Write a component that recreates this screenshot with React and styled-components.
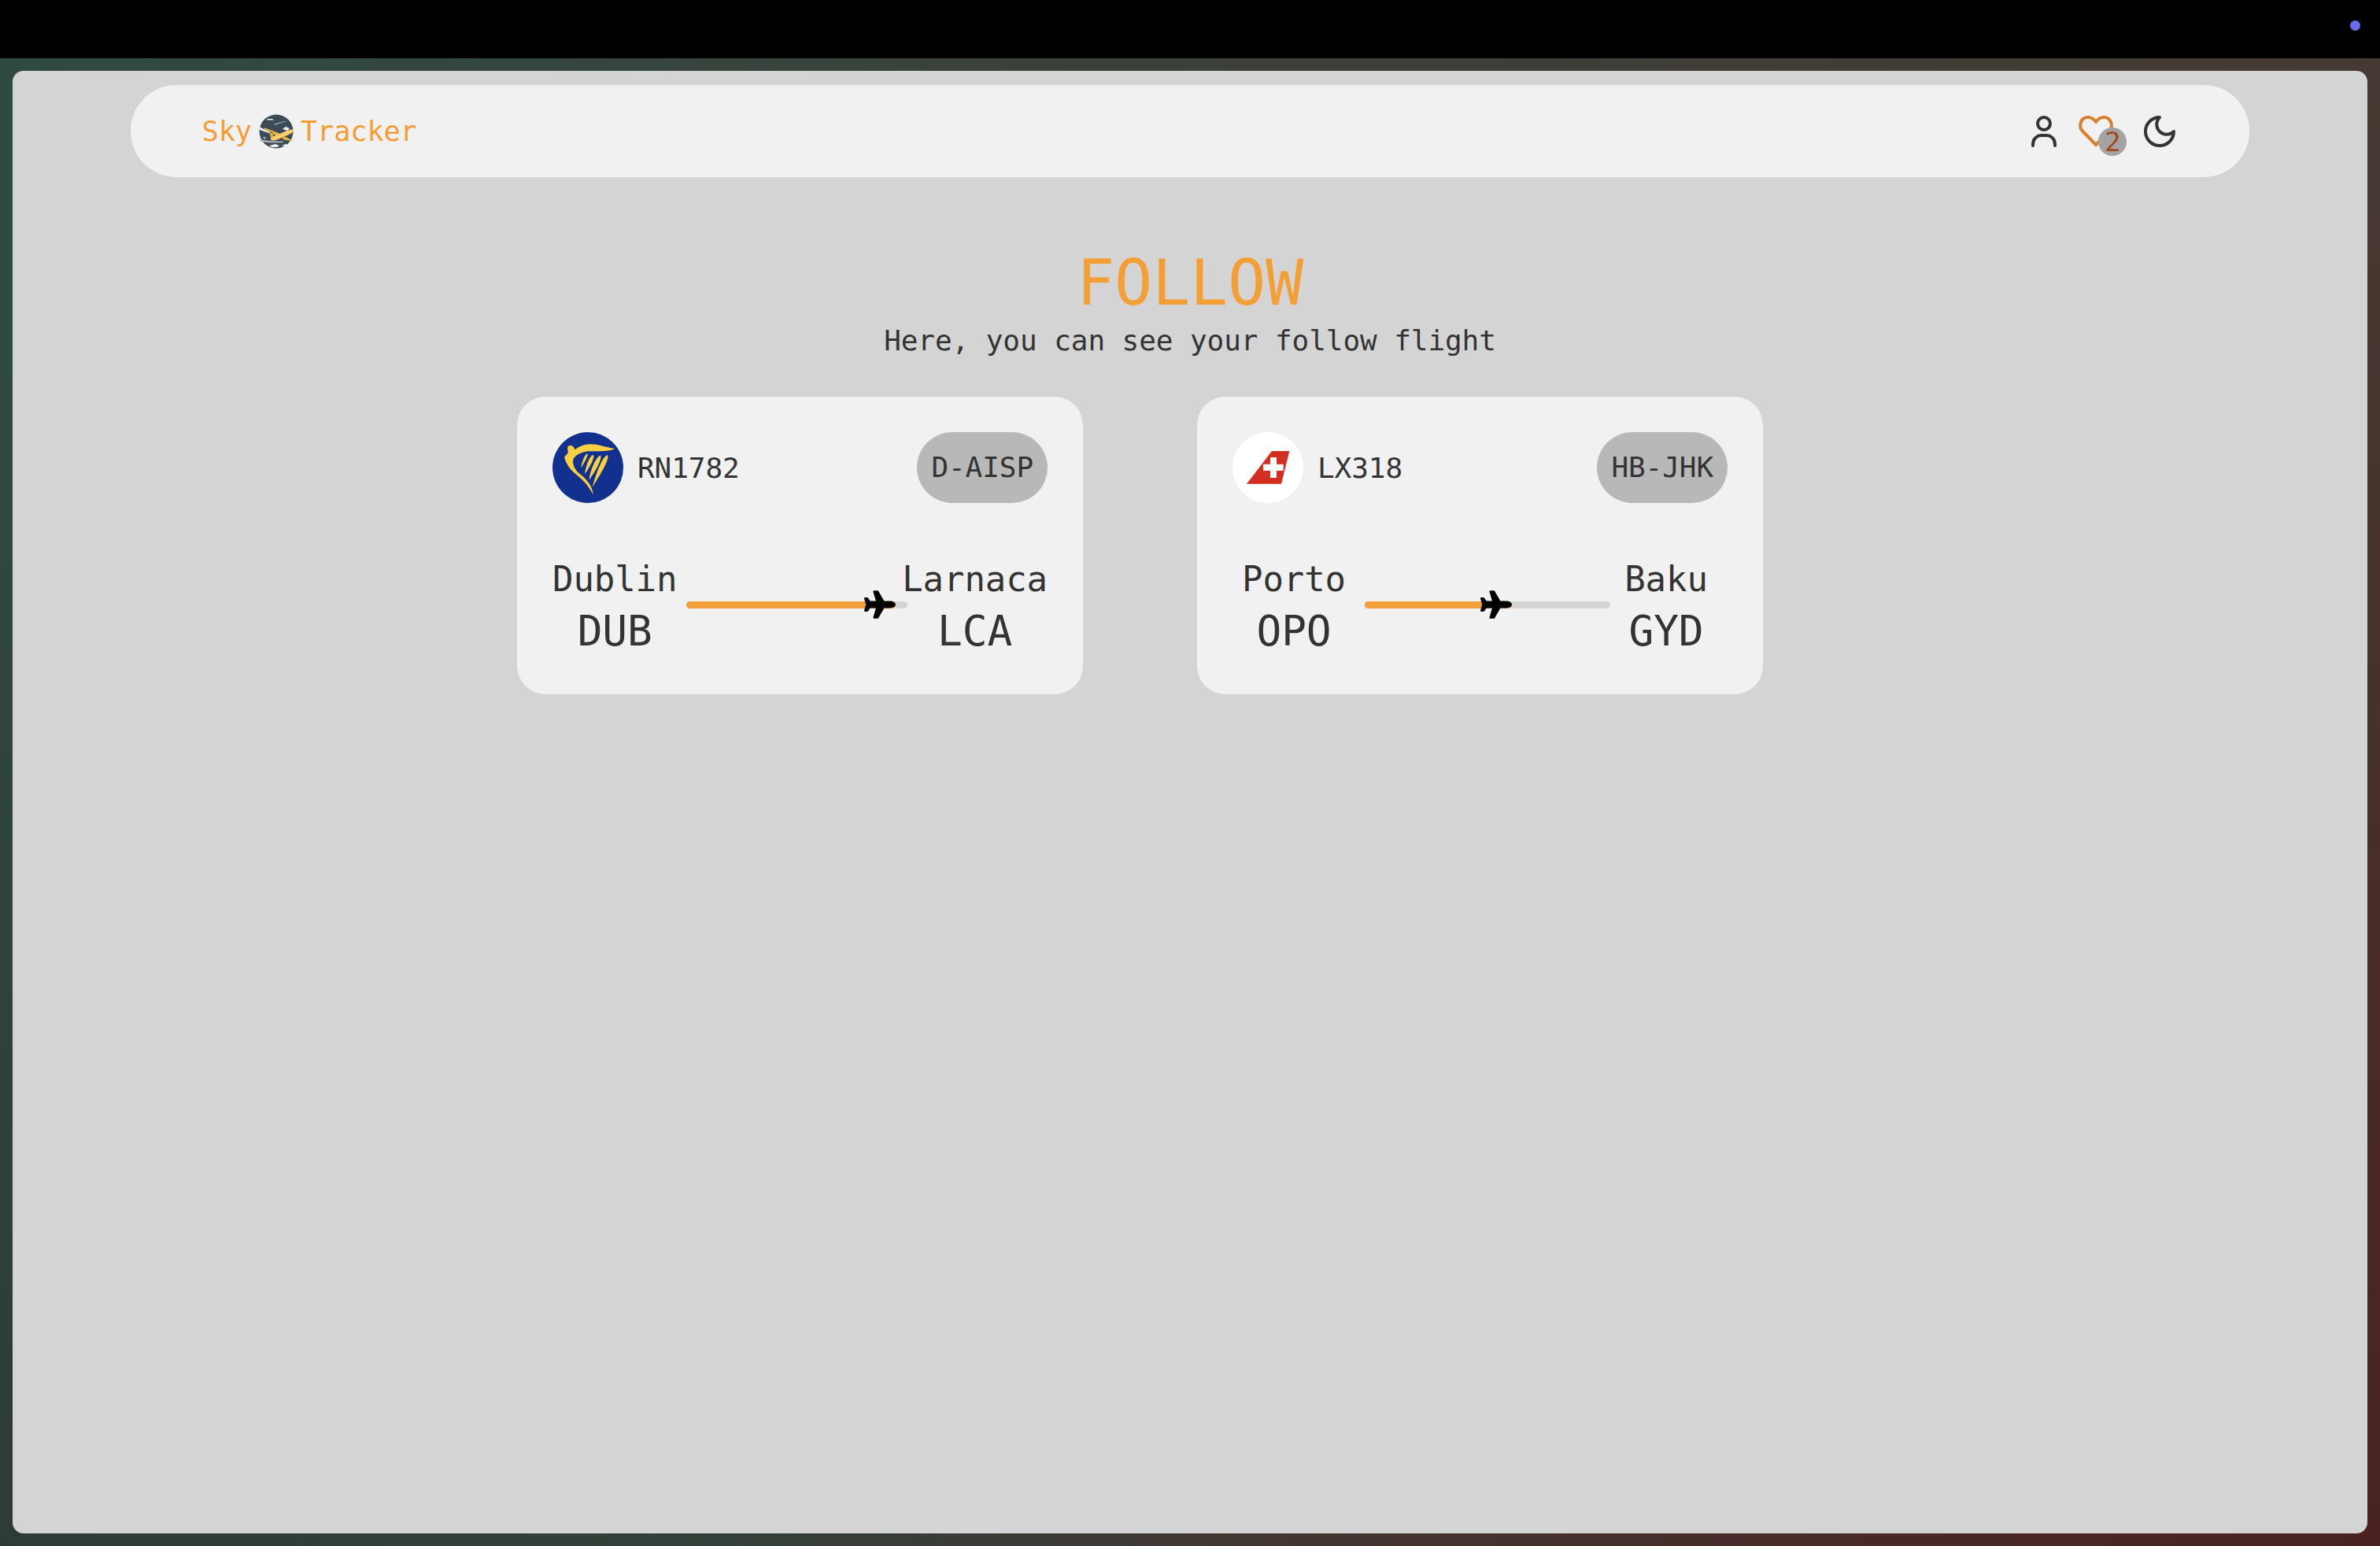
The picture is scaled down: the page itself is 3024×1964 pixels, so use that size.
import React from "react";
import styled, { createGlobalStyle } from "styled-components";
import { FaPlane } from "react-icons/fa";

const mono = `"DejaVu Sans Mono", "Liberation Mono", monospace`;

const Global = createGlobalStyle`
  html, body { margin: 0; padding: 0; height: 100%; background: #000; }
  #root { height: 1964px; }
  * { box-sizing: border-box; letter-spacing: -0.002em; }
`;

const Screen = styled.div`
  height: 1964px;
  display: flex;
  flex-direction: column;
  font-family: ${mono};
`;
const MenuBar = styled.div`
  height: 74px;
  flex: none;
  background: #000;
  display: flex;
  justify-content: flex-end;
  align-items: flex-start;
  padding: 26px 25px 0 0;
`;
const StatusDot = styled.span`
  width: 13px;
  height: 13px;
  border-radius: 50%;
  background: #6b6bef;
`;
const Desktop = styled.div`
  flex: 1;
  padding: 16px;
  display: flex;
  background:
    radial-gradient(ellipse 70% 100% at 100% 100%, #4a2222 0%, rgba(74, 34, 34, 0) 100%),
    radial-gradient(ellipse 50% 80% at 0% 100%, #2e3a36 0%, rgba(46, 58, 54, 0) 100%),
    linear-gradient(90deg, #2f4a42 0%, #3b4039 50%, #453a33 100%);
`;
const Window = styled.main`
  flex: 1;
  background: #d4d4d4;
  border-radius: 14px;
  padding-top: 18px;
  display: flex;
  flex-direction: column;
  align-items: center;
`;
const NavBar = styled.header`
  width: 90%;
  height: 117px;
  background: #f1f1f1;
  border-radius: 58px;
  padding: 0 94px 0 91px;
  display: flex;
  align-items: center;
  justify-content: space-between;
`;
const Brand = styled.div`
  display: flex;
  align-items: center;
  gap: 8px;
  color: #f49e36;
  font-size: 35.2px;
`;
const NavIcons = styled.div`
  display: flex;
  align-items: center;
  gap: 28px;
  color: #333;
`;
const IconSvg = styled.svg`
  display: block;
  fill: none;
  stroke: currentColor;
  stroke-width: ${(p) => p.$stroke || 4};
  stroke-linecap: round;
  stroke-linejoin: round;
`;
const HeartWrap = styled.div`
  position: relative;
  width: 44px;
  height: 40px;
  color: #d97f2e;
`;
const MoonSlot = styled.div`
  margin-left: 11px;
`;
const Badge = styled.span`
  position: absolute;
  left: 25px;
  top: 15px;
  width: 36px;
  height: 36px;
  border-radius: 50%;
  background: #a3a3a3;
  color: #a44a18;
  font-size: 34px;
  line-height: 36px;
  text-align: center;
`;
const Title = styled.h1`
  margin: 86px 0 0;
  font-size: 80px;
  font-weight: 400;
  line-height: 98px;
  color: #f49e36;
`;
const Subtitle = styled.p`
  margin: 0;
  font-size: 36px;
  line-height: 48px;
  color: #333;
`;
const Cards = styled.section`
  align-self: flex-start;
  margin: 47px 0 0 641px;
  display: flex;
  gap: 145px;
`;
const Card = styled.article`
  width: 719px;
  height: 378px;
  background: #f1f1f1;
  border-radius: 36px;
  padding: 45px;
  color: #333;
`;
const CardHead = styled.div`
  display: flex;
  align-items: center;
  justify-content: space-between;
`;
const Airline = styled.div`
  display: flex;
  align-items: center;
  gap: 18px;
  font-size: 36px;
`;
const LogoDisc = styled.svg`
  width: 90px;
  height: 90px;
  flex: none;
  display: block;
`;
const Registration = styled.span`
  height: 90px;
  padding: 0 18px;
  border-radius: 45px;
  background: #b8b8b8;
  font-size: 36px;
  line-height: 90px;
`;
const Route = styled.div`
  margin-top: 66px;
  display: flex;
  align-items: center;
`;
const Place = styled.div`
  min-width: 156px;
  text-align: center;
  flex: none;
`;
const City = styled.div`
  font-size: 44px;
  line-height: 62px;
`;
const Code = styled.div`
  font-size: 52.8px;
  line-height: 70px;
`;
const Track = styled.div`
  position: relative;
  flex: 1;
  height: 9px;
  margin: -6px -7px 0 12px;
  border-radius: 5px;
  background: #d4d4d4;
`;
const Fill = styled.div`
  position: relative;
  height: 100%;
  border-radius: 5px;
  background: #f2a03b;
`;
const PlaneMark = styled(FaPlane)`
  position: absolute;
  right: 0;
  top: 50%;
  width: 40px;
  height: 36px;
  margin-top: -18px;
  color: #000;
`;

const EarthLogo = () => (
  <svg width="46" height="46" viewBox="0 0 46 46" aria-hidden="true">
    <circle cx="23" cy="23" r="21.5" fill="#3d4b57" />
    <path d="M1.500 17 L15 24 L15 25.500 L2 21z M12 7 h6 l2 1.500 h-9z M31 20 l4 -3 l5 2 l-3 3z M6 30 l4 1 l-2 1.500z M14 41 l8 -2 l5 2 l-3 2 h-6z M30 41 l5 -2 l3 1 l-4 2z" fill="#eef1f2" />
    <path d="M20 13.500 L35 9.500 L35.500 10.500 L21 15z" fill="#8f9aa3" />
    <path d="M2 33 Q16 36 32 35.500 L32 37 Q14 38 4 36z" fill="#a9b1b7" />
    <path d="M7 19.500 L9 18.500 L28 26 L24 29z M28 29 L35 30 L45.500 35.500 L33 33.500z M14 23 L17 33 L20 32 L18 24z" fill="#e9b93f" />
    <path d="M16 33.500 Q15 31 20 29 L38 21.500 Q44.500 19.500 45 21.500 Q45 24 40 26.500 L24 33.500 Q18 35.500 16 33.500z" fill="#f6cf68" />
  </svg>
);

const UserIcon = () => (
  <IconSvg width="32" height="40" viewBox="0 0 32 40" aria-hidden="true">
    <circle cx="16" cy="10" r="8" />
    <path d="M2 38V36C2 29 8 25 12 25H20C24 25 30 29 30 36V38" />
  </IconSvg>
);

const HeartIcon = () => (
  <IconSvg width="44" height="40" viewBox="0 0 44 40" aria-hidden="true">
    <path d="M22 37L4.500 19C0 14 2 2 12 2C17 2 20 5 22 8C24 5 27 2 32 2C42 2 44 14 39.500 19Z" />
  </IconSvg>
);

const MoonIcon = () => (
  <IconSvg $stroke={2} width="40" height="40" viewBox="2 2 20 20" aria-hidden="true">
    <path d="M12 3a6 6 0 0 0 9 9 9 9 0 1 1-9-9Z" />
  </IconSvg>
);

const RyanairLogo = () => (
  <LogoDisc viewBox="35 25 270 270" aria-hidden="true">
    <circle cx="170" cy="160" r="135" fill="#12308e" />
    <path
      fill="#f8cf42"
      d="M273 88C245 84 215 72 185 71C160 70 138 78 120 92C119 82 112 76 102 75C92 76 90 85 94 97C96 103 90 110 80 120C88 150 105 170 130 190C155 210 175 235 190 262C187 230 165 205 140 185C122 170 110 150 114 128C122 113 145 100 170 98C205 96 245 102 273 88Z"
    />
    <path fill="#f8cf42" d="M165 108C155 115 147 140 143 162C152 148 166 125 169 112C169 108 167 107 165 108Z" />
    <path fill="#f8cf42" d="M188 112C174 120 160 160 158 185C170 168 192 132 192 117C192 113 190 111 188 112Z" />
    <path fill="#f8cf42" d="M216 114C200 122 178 170 175 207C188 190 220 140 219 119C219 115 218 113 216 114Z" />
    <path fill="#f8cf42" d="M243 113C225 118 198 190 187 235C205 205 248 140 246 118C246 114 245 113 243 113Z" />
  </LogoDisc>
);

const SwissLogo = () => (
  <LogoDisc viewBox="33 27 270 270" aria-hidden="true">
    <circle cx="168" cy="162" r="135" fill="#fff" />
    <path fill="#d42e20" d="M183 99H250L219 224H87Z" />
    <path fill="#fff" d="M177 123H201V149H227V174H201V201H177V174H150V149H177Z" />
  </LogoDisc>
);

const flights = [
  { logo: <RyanairLogo />, number: "RN1782", reg: "D-AISP", from: "Dublin", fromCode: "DUB", to: "Larnaca", toCode: "LCA", progress: 94.6 },
  { logo: <SwissLogo />, number: "LX318", reg: "HB-JHK", from: "Porto", fromCode: "OPO", to: "Baku", toCode: "GYD", progress: 60 },
];

export default function App() {
  return (
    <Screen>
      <Global />
      <MenuBar><StatusDot /></MenuBar>
      <Desktop>
        <Window>
          <NavBar>
            <Brand>Sky <EarthLogo /> Tracker</Brand>
            <NavIcons>
              <UserIcon />
              <HeartWrap>
                <HeartIcon />
                <Badge>2</Badge>
              </HeartWrap>
              <MoonSlot><MoonIcon /></MoonSlot>
            </NavIcons>
          </NavBar>
          <Title>FOLLOW</Title>
          <Subtitle>Here, you can see your follow flight</Subtitle>
          <Cards>
            {flights.map((f) => (
              <Card key={f.number}>
                <CardHead>
                  <Airline>{f.logo}{f.number}</Airline>
                  <Registration>{f.reg}</Registration>
                </CardHead>
                <Route>
                  <Place><City>{f.from}</City><Code>{f.fromCode}</Code></Place>
                  <Track>
                    <Fill style={{ width: `${f.progress}%` }}>
                      <PlaneMark />
                    </Fill>
                  </Track>
                  <Place><City>{f.to}</City><Code>{f.toCode}</Code></Place>
                </Route>
              </Card>
            ))}
          </Cards>
        </Window>
      </Desktop>
    </Screen>
  );
}
